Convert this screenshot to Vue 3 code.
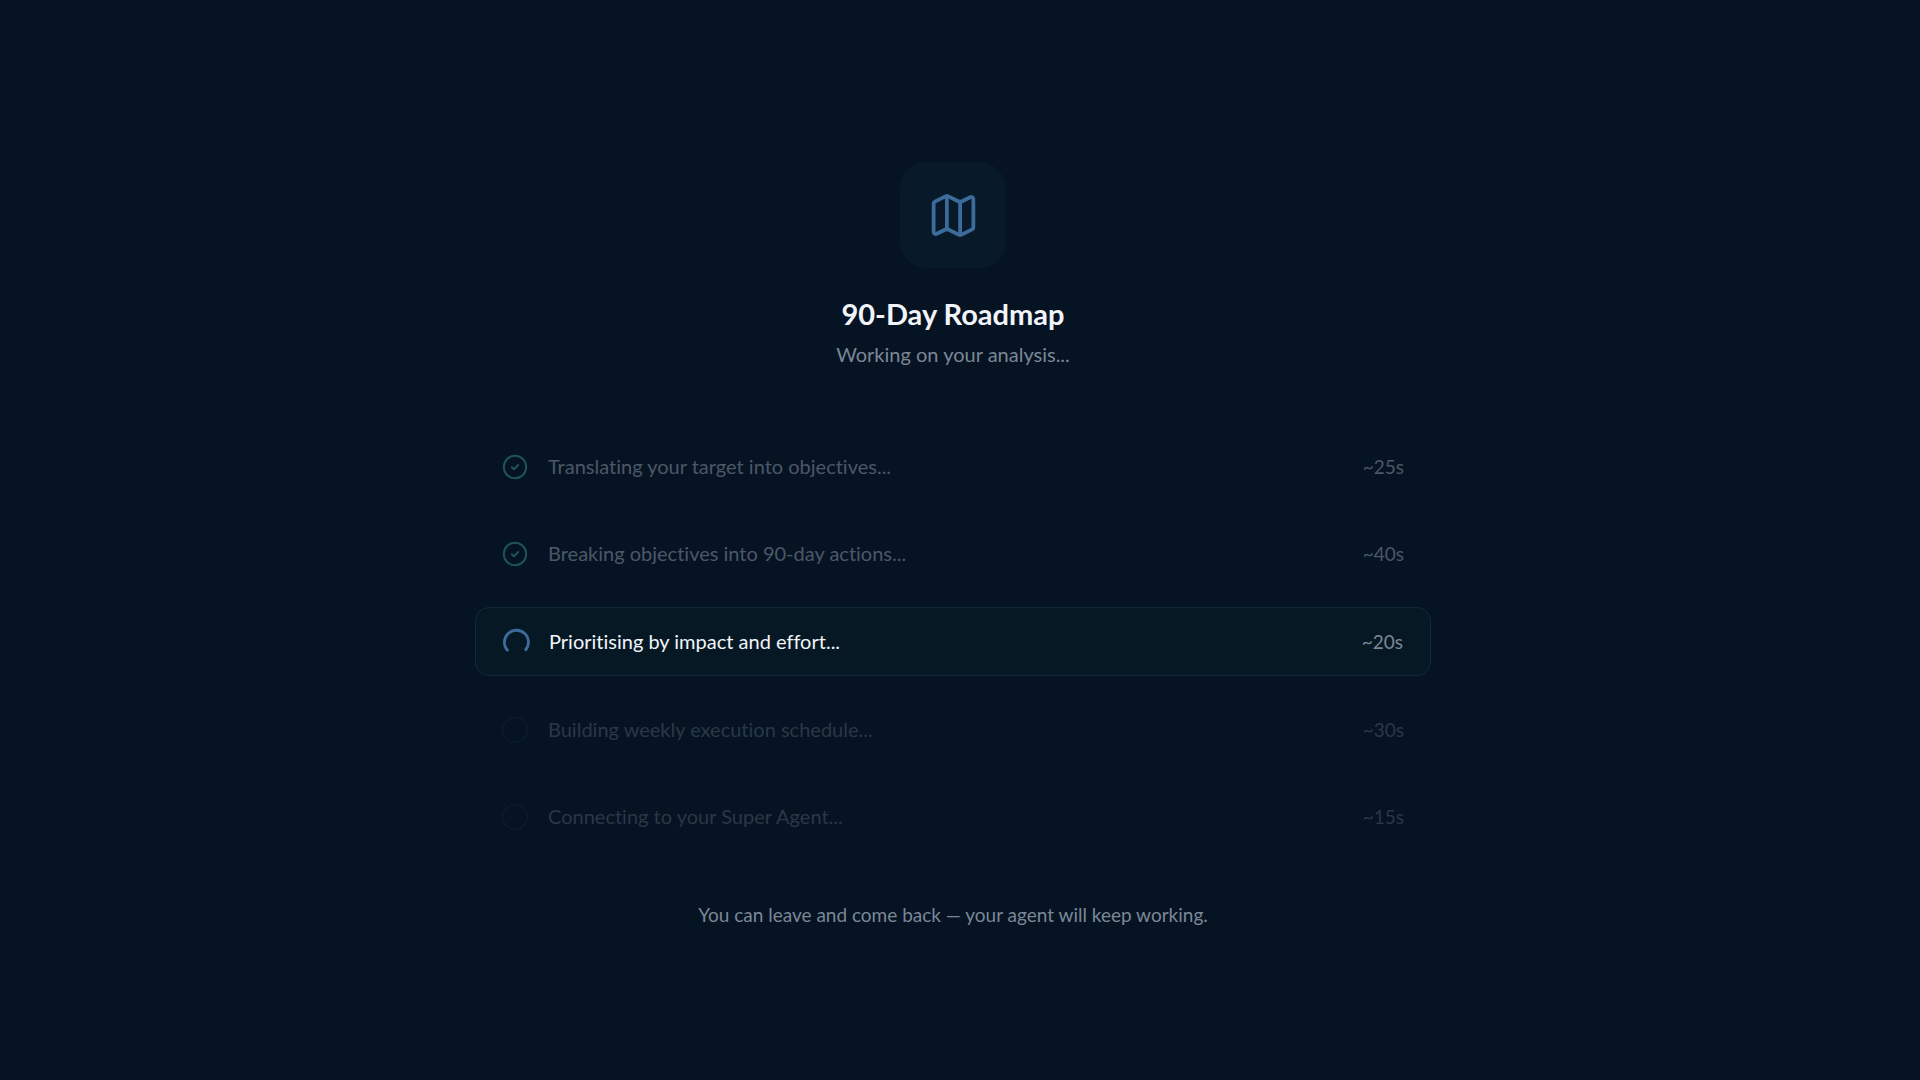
<template>
  <main class="page">
    <section class="progress">
      <div class="badge">
        <svg class="map-icon" viewBox="0 0 24 24" fill="none" stroke="currentColor" stroke-width="1.7" stroke-linecap="round" stroke-linejoin="round" aria-hidden="true">
          <path d="M14.106 5.553a2 2 0 0 0 1.788 0l3.659-1.83A1 1 0 0 1 21 4.619v12.764a1 1 0 0 1-.553.894l-4.553 2.277a2 2 0 0 1-1.788 0l-4.212-2.106a2 2 0 0 0-1.788 0l-3.659 1.83A1 1 0 0 1 3 19.381V6.618a1 1 0 0 1 .553-.894l4.553-2.277a2 2 0 0 1 1.788 0z" />
          <path d="M15 5.764v15M9 3.236v15" />
        </svg>
      </div>

      <h1 class="title">90-Day Roadmap</h1>
      <p class="subtitle">Working on your analysis...</p>

      <ul class="steps">
        <li v-for="step in steps" :key="step.text" class="step" :class="step.status">
          <svg v-if="step.status === 'done'" class="step-icon" viewBox="0 0 26 26" fill="none" stroke="currentColor" stroke-width="2" stroke-linecap="round" stroke-linejoin="round" aria-hidden="true">
            <circle cx="13" cy="13" r="11.2" />
            <path d="M9.8 13.2l2.1 2 4.3-4.2" />
          </svg>
          <svg v-else-if="step.status === 'active'" class="step-icon" viewBox="0 0 26 26" fill="none" stroke="currentColor" stroke-width="2.8" aria-hidden="true">
            <path d="M5.2 22A12 12 0 1 1 22 21.6" />
          </svg>
          <svg v-else class="step-icon" viewBox="0 0 26 26" fill="none" stroke="currentColor" stroke-width="1.2" aria-hidden="true">
            <circle cx="13" cy="13" r="12.3" />
          </svg>
          <span class="step-text">{{ step.text }}</span>
          <span class="step-time">{{ step.time }}</span>
        </li>
      </ul>

      <p class="note">You can leave and come back — your agent will keep working.</p>
    </section>
  </main>
</template>

<script setup>
const steps = [
  { text: 'Translating your target into objectives...', time: '~25s', status: 'done' },
  { text: 'Breaking objectives into 90-day actions...', time: '~40s', status: 'done' },
  { text: 'Prioritising by impact and effort...', time: '~20s', status: 'active' },
  { text: 'Building weekly execution schedule...', time: '~30s', status: 'pending' },
  { text: 'Connecting to your Super Agent...', time: '~15s', status: 'pending' }
];
</script>

<style>
  body {
    margin: 0;
    background-color: #061323;
  }
</style>

<style scoped>
  .page {
    box-sizing: border-box;
    min-height: 100vh;
    display: flex;
    align-items: center;
    justify-content: center;
    padding: 28px 14px 18px 0;
    font-family: Lato, "Open Sans", sans-serif;
    font-variant-ligatures: no-common-ligatures;
    color: #f1f5f9;
  }

  .progress {
    width: 100%;
    max-width: 956px;
    display: flex;
    flex-direction: column;
    align-items: center;
  }

  .badge {
    display: flex;
    align-items: center;
    justify-content: center;
    width: 106px;
    height: 106px;
    border-radius: 27px;
    background-color: #081a29;
    color: #3c6c9b;
  }

  .map-icon {
    width: 53px;
    height: 53px;
  }

  .title {
    margin: 26px 0 0;
    font-size: 29px;
    line-height: 40px;
    font-weight: 700;
  }

  .subtitle {
    margin: 6px 0 0;
    font-size: 20px;
    line-height: 28px;
    color: #7b8796;
  }

  .steps {
    box-sizing: border-box;
    width: 100%;
    margin: 65px 0 0;
    padding: 0;
    list-style: none;
    display: flex;
    flex-direction: column;
    gap: 20px;
  }

  .step {
    display: flex;
    align-items: center;
    gap: 20px;
    padding: 20px 27px;
    border-radius: 14px;
    font-size: 20px;
    line-height: 27px;
  }

  .step-icon {
    flex: none;
    width: 26px;
    height: 26px;
    overflow: visible;
  }

  .step-text {
    flex: 1;
  }

  .step-time {
    font-size: 19px;
  }

  .done .step-icon {
    color: #1d5556;
  }

  .done .step-text,
  .done .step-time {
    color: #4b5867;
  }

  .active {
    border: 1px solid #122a38;
    background-color: #071825;
  }

  .active .step-icon {
    color: #3c6c9b;
  }

  .active .step-time {
    color: #7b8796;
  }

  .pending .step-icon {
    color: #0d1e2d;
  }

  .pending .step-text,
  .pending .step-time {
    color: #2a3846;
  }

  .note {
    margin: 52px 0 0;
    font-size: 19px;
    line-height: 26px;
    color: #7b8796;
  }
</style>
